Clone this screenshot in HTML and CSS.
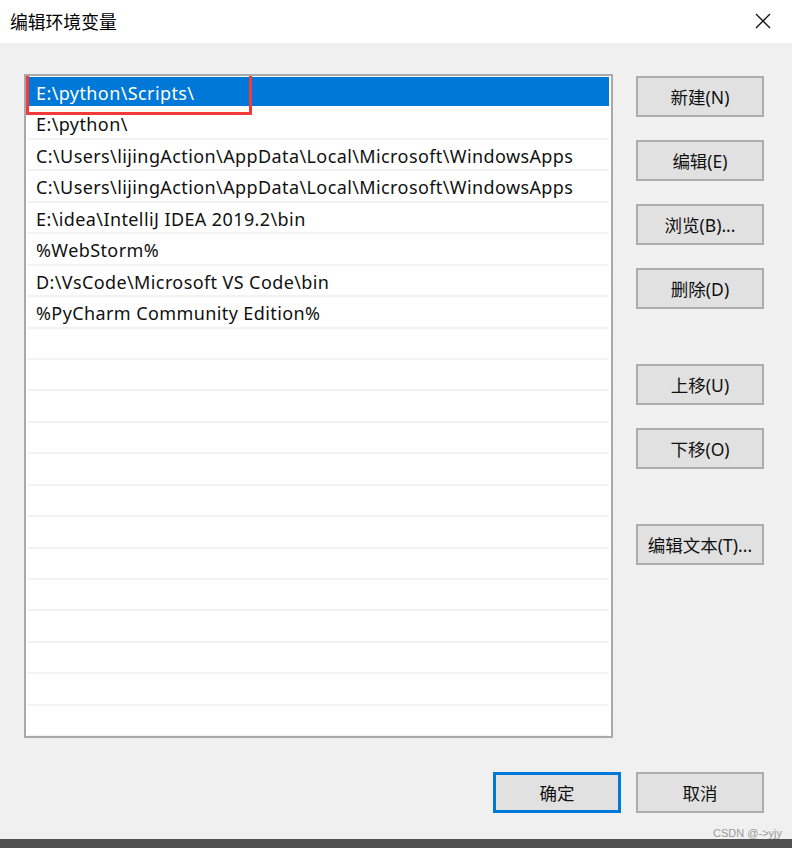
FILE: index.html
```html
<!DOCTYPE html>
<html lang="zh">
<head>
<meta charset="utf-8">
<title>编辑环境变量</title>
<link rel="stylesheet" href="styles.css">
</head>
<body>
<div class="dialog">
  <div class="titlebar">
    <span class="title">编辑环境变量</span>
    <svg class="close" width="16" height="16" viewBox="0 0 16 16"><path d="M1 1 L15 15 M15 1 L1 15" stroke="#111" stroke-width="1.3" fill="none"/></svg>
  </div>
  <div class="content">
    <div class="main">
      <div class="list">
        <div class="row selected"><span class="focus-box"></span>E:\python\Scripts\</div>
        <div class="row">E:\python\</div>
        <div class="row">C:\Users\lijingAction\AppData\Local\Microsoft\WindowsApps</div>
        <div class="row">C:\Users\lijingAction\AppData\Local\Microsoft\WindowsApps</div>
        <div class="row">E:\idea\IntelliJ IDEA 2019.2\bin</div>
        <div class="row">%WebStorm%</div>
        <div class="row">D:\VsCode\Microsoft VS Code\bin</div>
        <div class="row">%PyCharm Community Edition%</div>
        <div class="row"></div>
        <div class="row"></div>
        <div class="row"></div>
        <div class="row"></div>
        <div class="row"></div>
        <div class="row"></div>
        <div class="row"></div>
        <div class="row"></div>
        <div class="row"></div>
        <div class="row"></div>
        <div class="row"></div>
        <div class="row"></div>
        <div class="row"></div>
      </div>
      <div class="side">
        <button class="btn">新建(N)</button>
        <button class="btn">编辑(E)</button>
        <button class="btn">浏览(B)...</button>
        <button class="btn">删除(D)</button>
        <button class="btn group">上移(U)</button>
        <button class="btn">下移(O)</button>
        <button class="btn group">编辑文本(T)...</button>
      </div>
    </div>
    <div class="footer">
      <button class="btn default">确定</button>
      <button class="btn">取消</button>
    </div>
  </div>
  <div class="taskbar"></div>
  <div class="watermark">CSDN @-&gt;yjy</div>
</div>
</body>
</html>
```

FILE: styles.css
```css
* { box-sizing: border-box; }
html, body { margin: 0; padding: 0; }
body {
  width: 792px;
  height: 848px;
  overflow: hidden;
  font-family: "Noto Sans", "Noto Sans CJK SC", sans-serif;
  color: #000;
}
.dialog {
  position: relative;
  width: 792px;
  height: 848px;
  display: flex;
  flex-direction: column;
  background: #f0f0f0;
}
.titlebar {
  height: 43px;
  background: #fff;
  display: flex;
  align-items: center;
  justify-content: space-between;
  padding: 0 21px 2px 10px;
}
.title {
  font-family: "Noto Sans CJK SC", sans-serif;
  font-size: 17.8px;
  color: #000;
}
.content {
  flex: 1;
  padding: 31px 28px 0 24px;
}
.main {
  display: flex;
  gap: 23px;
}
.list {
  width: 589px;
  height: 664px;
  border: 2px solid #a9a9a9;
  background: #fff;
  padding: 1px 2px 0 1px;
  overflow: hidden;
}
.row {
  position: relative;
  height: 31.45px;
  border-bottom: 2px solid #f2f2f2;
  padding-left: 9px;
  padding-top: 2px;
  font-size: 18px;
  letter-spacing: 0.4px;
  line-height: 28px;
  white-space: nowrap;
  color: #111;
}
.row.selected {
  background: #0078d7;
  color: #fff;
  border-bottom-color: #fff;
}
.focus-box {
  position: absolute;
  left: -1px;
  top: -5px;
  width: 226px;
  height: 43px;
  border: 3px solid #f23a3a;
}
.side {
  display: flex;
  flex-direction: column;
  gap: 23px;
  padding-top: 2px;
}
.btn {
  width: 128px;
  height: 41px;
  background: #e1e1e1;
  border: 2px solid #adadad;
  font-family: "Noto Sans", "Noto Sans CJK SC", sans-serif;
  font-size: 17.5px;
  color: #111;
  padding: 0;
  margin: 0;
}
.btn.group { margin-top: 32px; }
.footer {
  display: flex;
  justify-content: flex-end;
  gap: 15px;
  margin-top: 34px;
}
.btn.default {
  border: 3px solid #0078d7;
}
.taskbar {
  height: 9px;
  background: #505050;
}
.watermark {
  position: absolute;
  right: 10px;
  bottom: 9px;
  font-family: "Liberation Sans", sans-serif;
  font-size: 11px;
  color: #9a9a9a;
}
```
